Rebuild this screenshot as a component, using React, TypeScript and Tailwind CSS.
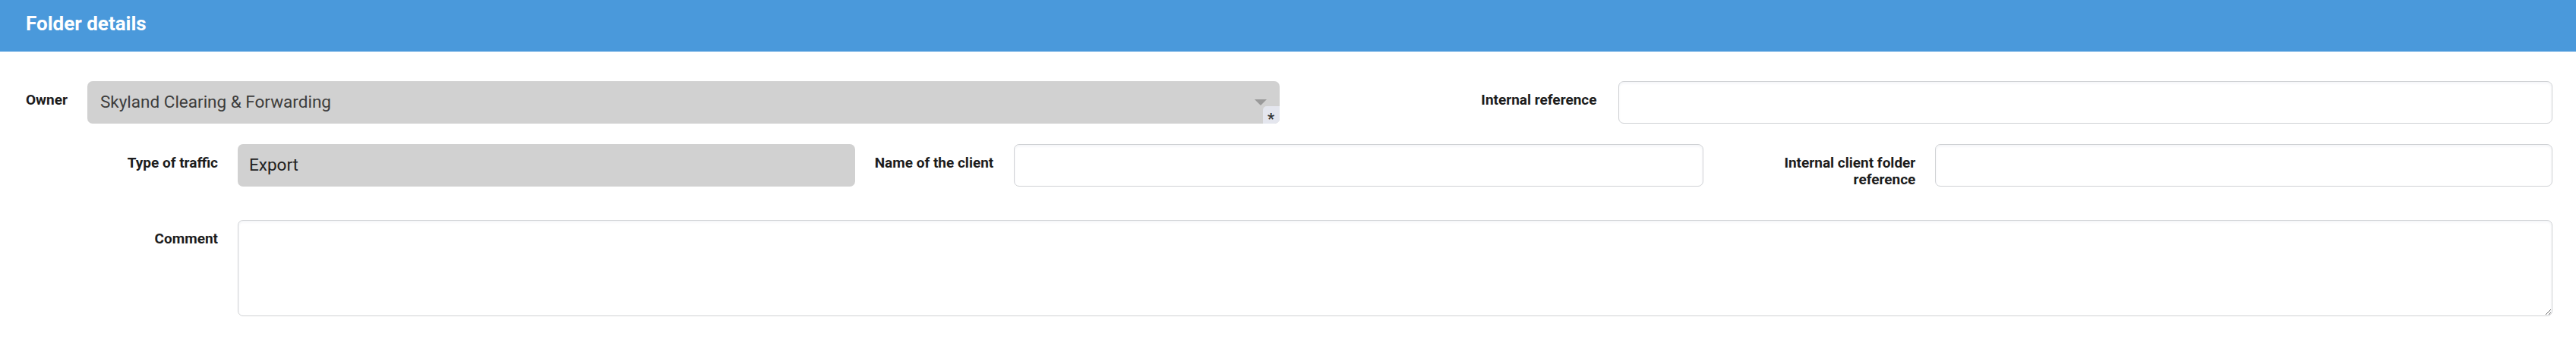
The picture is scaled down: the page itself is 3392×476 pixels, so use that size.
import { ReactNode } from "react";

const labelCls =
  "pt-[14px] text-[19px] leading-[22px] font-bold text-[#1c1c1c] shrink-0";
const inputCls =
  "flex-1 min-w-0 h-[56px] rounded-[7px] border border-[#cfd1d4] bg-white px-[15px] text-[22.5px] text-[#222] outline-none shadow-[inset_0_2px_3px_rgba(60,90,140,0.06)]";

function Label({ children, className = "" }: { children: ReactNode; className?: string }) {
  return <label className={`${labelCls} ${className}`}>{children}</label>;
}

export default function App() {
  return (
    <div className="min-h-screen bg-white font-['Roboto','Liberation_Sans',sans-serif]">
      <div className="h-[68px] bg-[#4a99db] px-[34px] pt-[16px]">
        <h2 className="text-[26px] leading-[30px] font-bold text-white">Folder details</h2>
      </div>

      <div className="pl-[34px] pr-[31px] pt-[39px]">
        {/* row 1 */}
        <div className="grid grid-cols-2 gap-x-[26px]">
          <div className="flex gap-[26px]">
            <Label>Owner</Label>
            <div className="relative flex-1 min-w-0 h-[56px] rounded-[7px] bg-[#d1d1d1] flex items-center pl-[17px] text-[22.5px] text-[#3d3d3d]">
              Skyland Clearing &amp; Forwarding
              <span className="absolute right-[17px] top-[24px] w-0 h-0 border-l-[8px] border-r-[8px] border-t-[8px] border-l-transparent border-r-transparent border-t-[#9a9a9a]" />
              <span className="absolute right-0 bottom-0 w-[22px] h-[23px] rounded-tl-[5px] rounded-br-[7px] bg-[#e4e6ee] flex justify-center text-[20px] leading-[20px] font-bold text-[#333] pt-[7px]">
                *
              </span>
            </div>
          </div>
          <div className="flex gap-[28px]">
            <Label className="w-[392px] text-right">Internal reference</Label>
            <input className={inputCls} />
          </div>
        </div>

        {/* row 2 */}
        <div className="mt-[27px] h-[56px] grid grid-cols-3 gap-x-[26px]">
          <div className="flex gap-[26px]">
            <Label className="w-[253px] text-right">Type of traffic</Label>
            <div className="flex-1 min-w-0 h-[56px] rounded-[7px] bg-[#d1d1d1] flex items-center pl-[15px] text-[22.5px] text-[#222]">
              Export
            </div>
          </div>
          <div className="flex gap-[27px]">
            <Label className="text-right">Name of the client</Label>
            <input className={inputCls} />
          </div>
          <div className="flex gap-[26px]">
            <Label className="w-[253px] text-right">Internal client folder reference</Label>
            <input className={inputCls} />
          </div>
        </div>

        {/* row 3 */}
        <div className="mt-[44px] flex gap-[26px]">
          <Label className="w-[253px] text-right">Comment</Label>
          <textarea className="flex-1 min-w-0 h-[127px] rounded-[7px] border border-[#cfd1d4] bg-white px-[15px] py-[10px] text-[22.5px] outline-none shadow-[inset_0_2px_3px_rgba(60,90,140,0.06)]" />
        </div>
      </div>
    </div>
  );
}
